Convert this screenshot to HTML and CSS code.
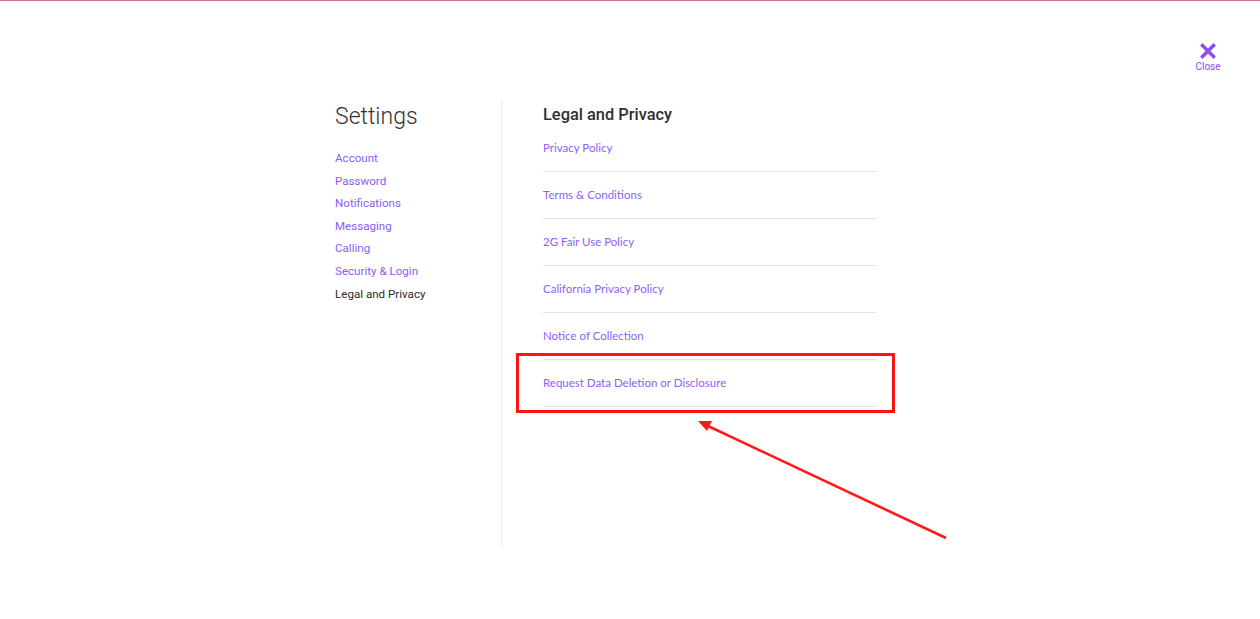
FILE: index.html
```html
<!DOCTYPE html>
<html lang="en">
<head>
<meta charset="utf-8">
<title>Settings - Legal and Privacy</title>
<link rel="stylesheet" href="styles.css">
</head>
<body>
<div class="topline"></div>
<header class="topbar">
  <a class="close" href="#">
    <svg class="close-icon" width="16" height="16" viewBox="0 0 16 16" aria-hidden="true">
      <path d="M2.5 2.5 L13.5 13.5 M13.5 2.5 L2.5 13.5" stroke="#8a4cf2" stroke-width="3.4" stroke-linecap="square"/>
    </svg>
    <span class="close-label">Close</span>
  </a>
</header>
<main class="page">
  <aside class="sidebar">
    <h1 class="title">Settings</h1>
    <nav class="nav">
      <a href="#">Account</a>
      <a href="#">Password</a>
      <a href="#">Notifications</a>
      <a href="#">Messaging</a>
      <a href="#">Calling</a>
      <a href="#">Security &amp; Login</a>
      <a href="#" class="active">Legal and Privacy</a>
    </nav>
  </aside>
  <section class="content">
    <h2 class="heading">Legal and Privacy</h2>
    <ul class="links">
      <li><a href="#">Privacy Policy</a></li>
      <li><a href="#">Terms &amp; Conditions</a></li>
      <li><a href="#">2G Fair Use Policy</a></li>
      <li><a href="#">California Privacy Policy</a></li>
      <li><a href="#">Notice of Collection</a></li>
      <li><a href="#">Request Data Deletion or Disclosure</a></li>
    </ul>
  </section>
</main>
<div class="highlight-box"></div>
<svg class="arrow" width="1260" height="619" viewBox="0 0 1260 619" aria-hidden="true">
  <line x1="946" y1="538" x2="708" y2="426" stroke="#ff1a1a" stroke-width="2.6"/>
  <polygon points="698,421 712,421 707,431" fill="#ff1a1a"/>
</svg>
</body>
</html>
```
FILE: styles.css
```css
html, body {
  margin: 0;
  padding: 0;
  background: #ffffff;
}
body {
  font-family: Roboto, "Liberation Sans", sans-serif;
  color: #2f2f33;
  width: 1260px;
  height: 619px;
  overflow: hidden;
  position: relative;
}
.topline {
  height: 1px;
  background: #d0709c;
}
.topbar {
  display: flex;
  justify-content: flex-end;
  padding-top: 42px;
  padding-right: 39px;
}
.close {
  display: flex;
  flex-direction: column;
  align-items: center;
  text-decoration: none;
  width: 26px;
}
.close-icon {
  display: block;
  flex-shrink: 0;
}
.close-label {
  font-family: Roboto, "Liberation Sans", sans-serif;
  font-size: 10px;
  line-height: 12px;
  color: #8a4cf2;
  margin-top: 2px;
}
.page {
  display: flex;
  padding-left: 335px;
  margin-top: 27px;
}
.sidebar {
  width: 167px;
  height: 447px;
  border-right: 1px solid #ededed;
  box-sizing: border-box;
}
.title {
  margin: 0;
  padding-top: 2px;
  font-family: Roboto, sans-serif;
  font-weight: 300;
  font-size: 23px;
  line-height: 30px;
  color: #333336;
}
.nav {
  display: flex;
  flex-direction: column;
  margin-top: 15px;
}
.nav a {
  font-family: Roboto, sans-serif;
  font-size: 11.6px;
  line-height: 22.6px;
  color: #8b5cf6;
  text-decoration: none;
}
.nav a.active {
  color: #2b2b2e;
}
.content {
  padding-left: 41px;
  width: 333px;
}
.heading {
  margin: 0;
  padding-top: 4px;
  font-family: Roboto, sans-serif;
  font-weight: 500;
  font-size: 16.4px;
  line-height: 21px;
  color: #2f2f33;
}
.links {
  list-style: none;
  margin: 0;
  padding: 0;
}
.links li {
  padding: 14px 0 14px;
  border-bottom: 1px solid #e2e2e2;
}
.links a {
  display: block;
  font-family: Lato, "Open Sans", sans-serif;
  font-size: 11.5px;
  line-height: 18px;
  color: #8d5ff5;
  text-decoration: none;
}
.highlight-box {
  position: absolute;
  left: 516px;
  top: 353px;
  width: 379px;
  height: 60px;
  border: 3px solid #ff1414;
  box-sizing: border-box;
}
.arrow {
  position: absolute;
  left: 0;
  top: 0;
  pointer-events: none;
}
```
